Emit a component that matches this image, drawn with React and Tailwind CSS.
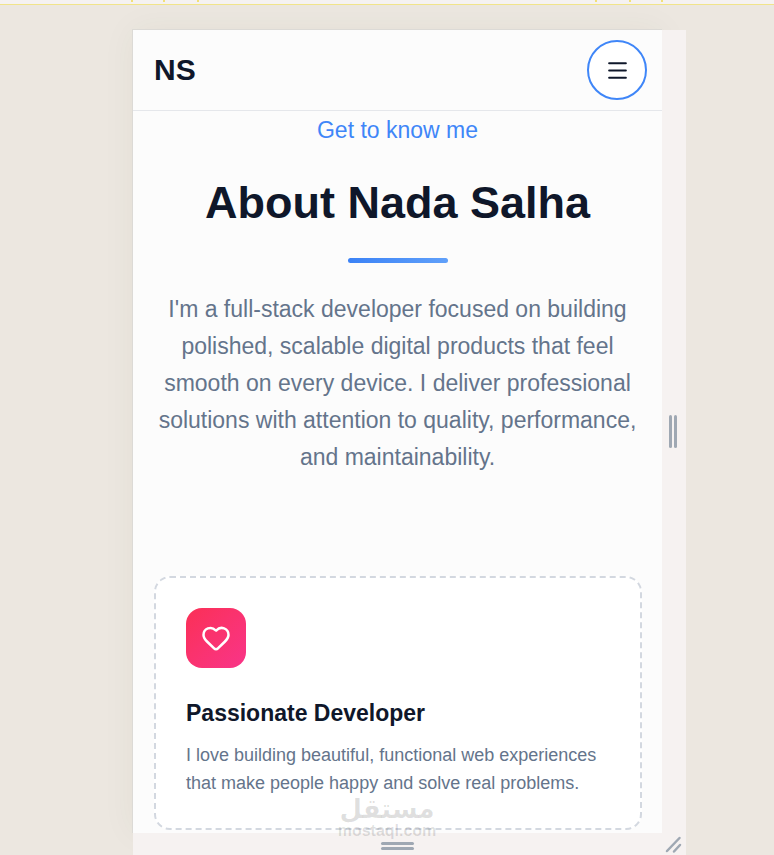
import { Heart, Menu } from 'lucide-react';

const LEFT_TICKS = ['ml-[131px]', 'ml-[30px]', 'ml-8'];
const RIGHT_TICKS = ['mr-8', 'mr-[30px]', 'mr-[111px]'];

function Ruler() {
  return (
    <div className="flex h-[5px] shrink-0 justify-between border-b border-[#f1e48a] bg-[#f5f2f1]">
      <div className="flex">
        {LEFT_TICKS.map((margin) => (
          <span key={margin} className={`h-[2px] w-[2px] bg-[#f1e07a] ${margin}`} />
        ))}
      </div>
      <div className="flex">
        {RIGHT_TICKS.map((margin) => (
          <span key={margin} className={`h-[2px] w-[2px] bg-[#f1e07a] ${margin}`} />
        ))}
      </div>
    </div>
  );
}

function Header() {
  return (
    <header className="flex h-[81px] shrink-0 items-center justify-between border-b border-[#e5e7eb] pl-[21px] pr-[15px]">
      <a href="#home" className="text-[30px] leading-9 font-bold">NS</a>
      <button
        type="button"
        aria-label="Open menu"
        className="flex size-[60px] items-center justify-center rounded-full border-2 border-[#3f86f8] bg-white"
      >
        <Menu size={25} strokeWidth={2} />
      </button>
    </header>
  );
}

function About() {
  return (
    <section className="flex flex-col px-5 text-center">
      <p className="mt-[3px] text-[23px] leading-8 text-[#3f86f8]">Get to know me</p>
      <h2 className="mt-[29px] text-[45px] leading-[56px] font-bold">About Nada Salha</h2>
      <div className="mx-auto mt-[27px] h-[5px] w-[100px] rounded-full bg-linear-to-r from-[#3b82f6] to-[#60a0fa]" />
      <p className="mt-7 text-[23px] leading-[37px] text-[#64748b]">
        I'm a full-stack developer focused on building polished, scalable digital products that feel
        smooth on every device. I deliver professional solutions with attention to quality,
        performance, and maintainability.
      </p>
    </section>
  );
}

function FeatureCard({ icon: Icon, title, text }) {
  return (
    <article className="rounded-2xl border-2 border-dashed border-[#d3d8e0] bg-white px-[30px] pt-[30px] pb-[31px]">
      <div className="flex size-[60px] items-center justify-center rounded-2xl bg-linear-to-br from-[#fb2f55] to-[#f93488] text-white">
        <Icon size={30} strokeWidth={2} />
      </div>
      <h3 className="mt-[29px] text-[23px] leading-8 font-bold">{title}</h3>
      <p className="mt-3 text-[18px] leading-7 text-[#64748b]">{text}</p>
    </article>
  );
}

function Watermark() {
  return (
    <div className="pointer-events-none absolute inset-x-0 bottom-4 flex flex-col items-center pr-11 text-black/12">
      <span lang="ar" dir="rtl" className="text-[26px] leading-7 font-bold font-['DejaVu_Sans',sans-serif]">مستقل</span>
      <span className="text-[16px] leading-4 font-bold">mostaql.com</span>
    </div>
  );
}

export default function App() {
  return (
    <div className="flex h-screen flex-col overflow-hidden bg-[#ece7e0] font-['Liberation_Sans',Arial,sans-serif] text-[#0f172a]">
      <Ruler />
      <div className="relative mt-6 mr-[88px] ml-[132px] flex min-h-0 flex-1 flex-col">
        <div className="flex min-h-0 flex-1">
          <main className="flex min-w-0 flex-1 flex-col overflow-hidden border-t border-l border-[#dcdad6] bg-[#fcfcfc] shadow-[0_0_32px_rgba(60,70,30,0.05)]">
            <Header />
            <About />
            <div className="mt-[100px] pr-5 pl-[21px]">
              <FeatureCard
                icon={Heart}
                title="Passionate Developer"
                text="I love building beautiful, functional web experiences that make people happy and solve real problems."
              />
            </div>
          </main>
          <div className="relative mt-px flex w-6 shrink-0 items-center justify-center gap-[2px] bg-[#f6f2f1] pr-[2px]">
            <span className="h-[33px] w-[3px] rounded-full bg-[#9fa8b3]" />
            <span className="h-[33px] w-[3px] rounded-full bg-[#9fa8b3]" />
          </div>
        </div>
        <div className="relative ml-px flex h-[22px] shrink-0 bg-[#f6f2f1]">
          <div className="flex flex-1 flex-col items-center justify-center gap-[2px] pt-1">
            <span className="h-[3px] w-[33px] rounded-full bg-[#9fa8b3]" />
            <span className="h-[3px] w-[33px] rounded-full bg-[#9fa8b3]" />
          </div>
          <svg viewBox="0 0 24 22" className="h-[22px] w-6 stroke-[#9fa8b3]" strokeWidth="2.5" strokeLinecap="round">
            <path d="M5 18 17.500 5M12 18.500l6-6.500" />
          </svg>
        </div>
        <Watermark />
      </div>
    </div>
  );
}
